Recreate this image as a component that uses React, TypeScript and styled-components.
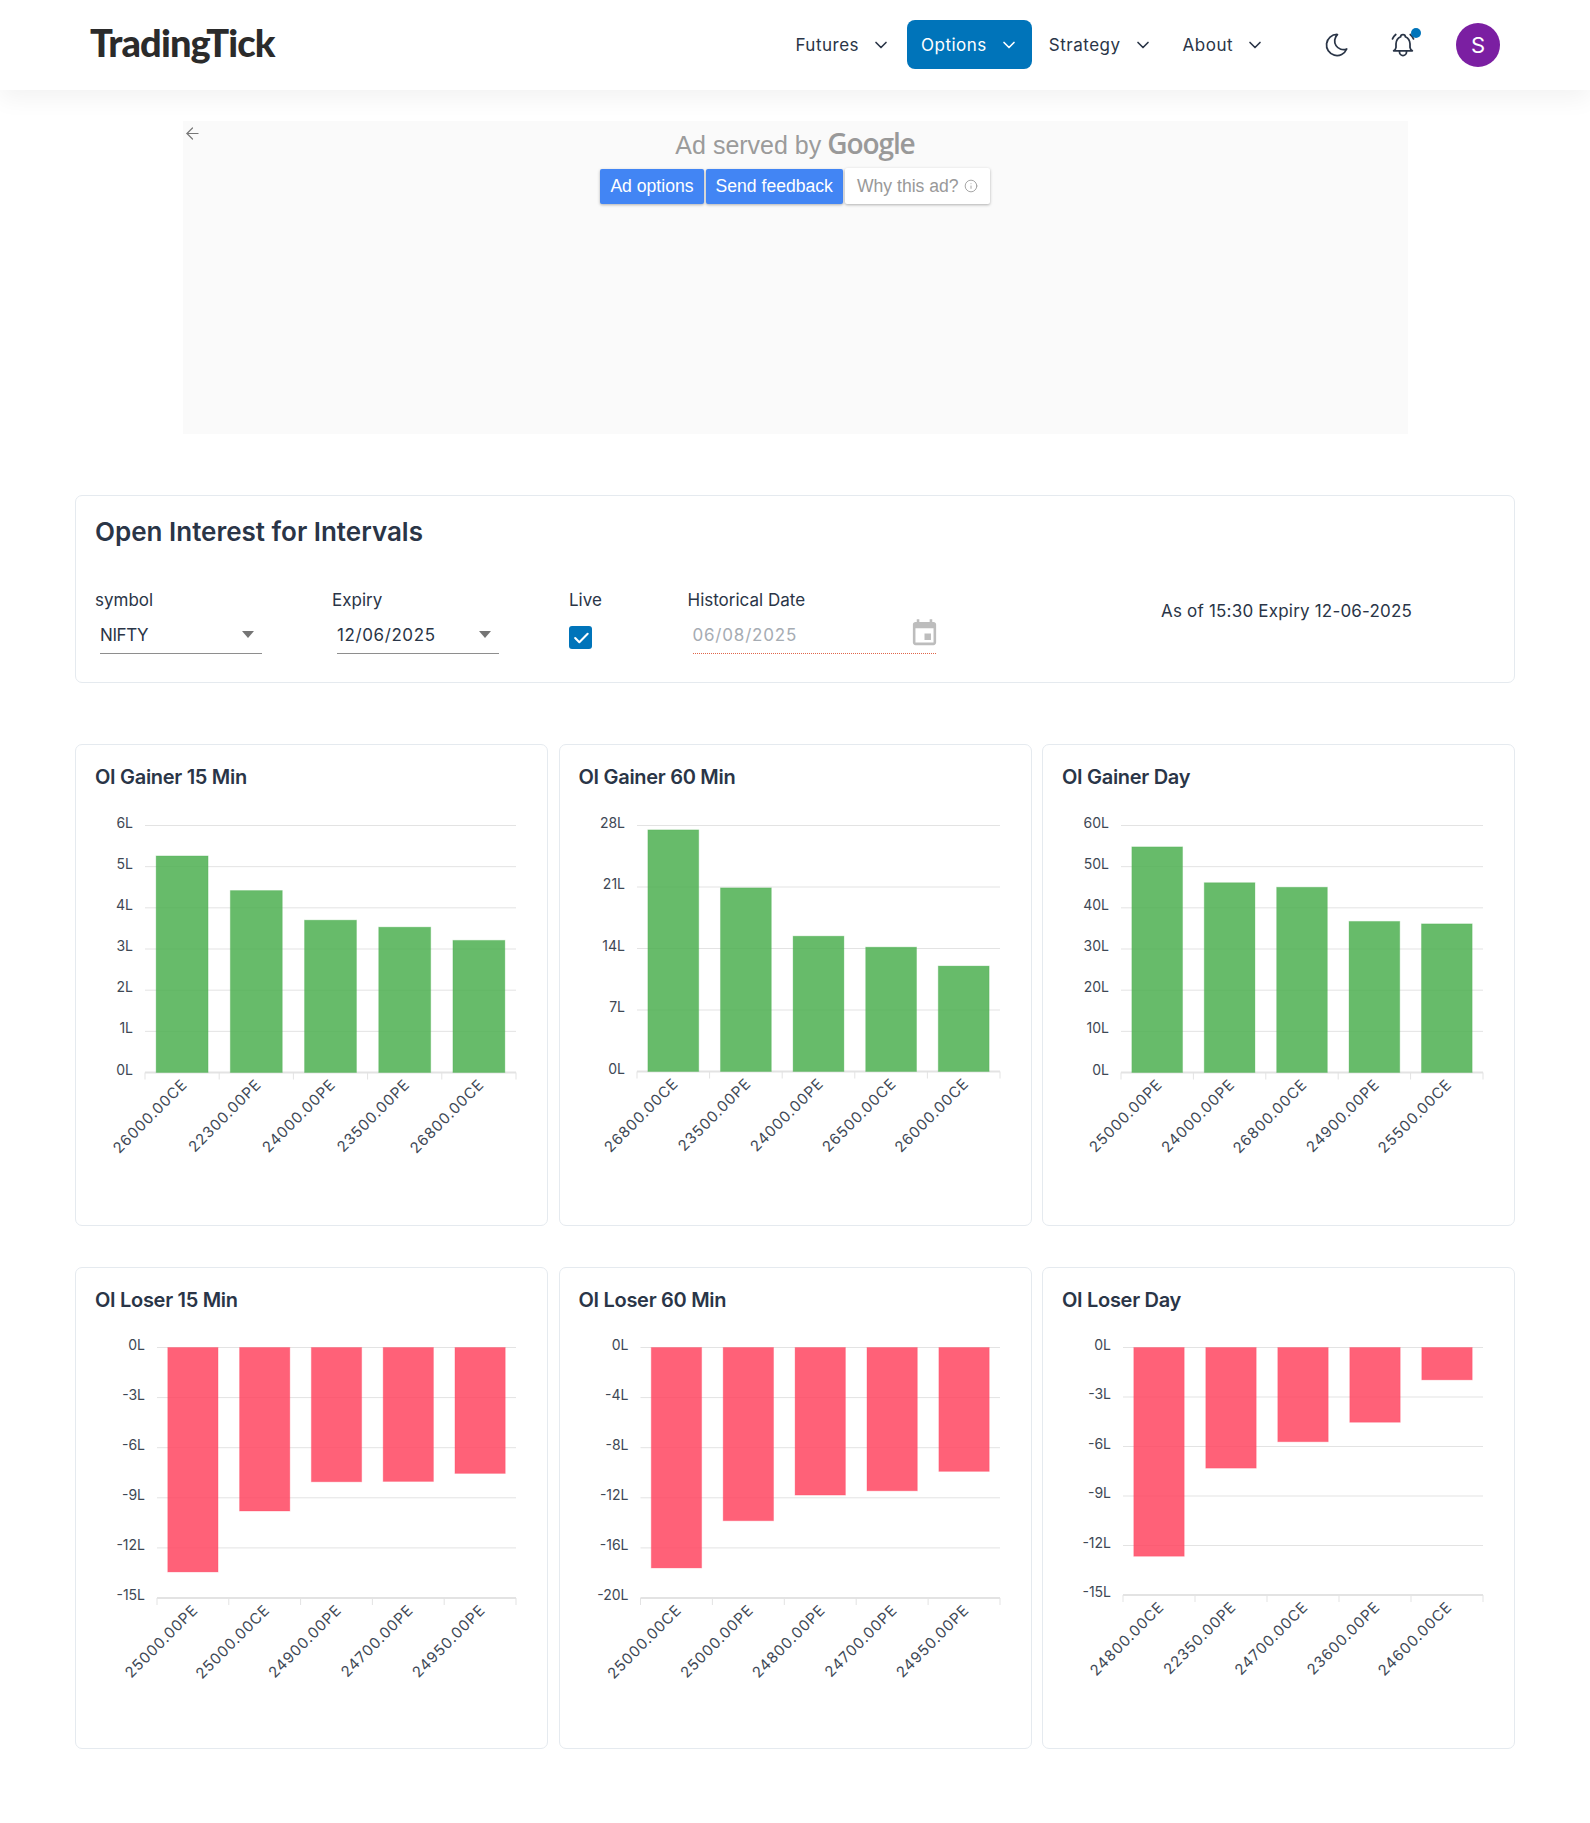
import styled, { createGlobalStyle } from 'styled-components'
import { TbBellRinging, TbCheck, TbChevronDown, TbMoon } from 'react-icons/tb'
import { ArrowLeft, Info } from 'lucide-react'

const GlobalStyle = createGlobalStyle`
    * { box-sizing: border-box; }
    body {
        margin: 0;
        background: #fff;
        color: #2a3547;
        font-family: Inter, "Open Sans", sans-serif;
    }
`

const Page = styled.div`
    min-height: 1823px;
    background: #fff;
`

const Header = styled.header`
    height: 90px;
    padding: 0 90px;
    display: flex;
    align-items: center;
    background: #fff;
    box-shadow: 0 9px 22px rgba(0, 0, 0, 0.05);
    position: relative;
`

const Logo = styled.div`
    font-family: Lato, sans-serif;
    font-weight: 900;
    font-size: 38px;
    letter-spacing: -0.9px;
    color: #2b2b2b;
    margin-right: auto;
    padding-bottom: 6px;
`

const Nav = styled.nav`
    display: flex;
    align-items: center;
    gap: 3px;
`

const NavItem = styled.div<{ $active?: boolean }>`
    height: 49px;
    margin-bottom: 2px;
    padding: 2px 13px 0 14px;
    display: flex;
    align-items: center;
    gap: 12px;
    border-radius: 8px;
    font-size: 17px;
    letter-spacing: 0.5px;
    color: ${(p) => (p.$active ? '#fff' : '#2a3547')};
    background: ${(p) => (p.$active ? '#0074ba' : 'transparent')};
`

const IconSlot = styled.div`
    position: relative;
    width: 28px;
    height: 28px;
    display: flex;
    align-items: center;
    justify-content: center;
    color: #2a3547;
`

const Tools = styled.div`
    display: flex;
    align-items: center;
    gap: 38px;
    margin-left: 45px;
`

const Dot = styled.span`
    position: absolute;
    top: -3px;
    right: -4px;
    width: 10px;
    height: 10px;
    border-radius: 50%;
    background: #0074ba;
`

const Avatar = styled.div`
    width: 44px;
    height: 44px;
    margin-left: 1px;
    border-radius: 50%;
    background: #7b1fa2;
    color: #fff;
    font-size: 22px;
    display: flex;
    align-items: center;
    justify-content: center;
`

const Main = styled.main`
    padding: 31px 75px 0;
`

const AdBox = styled.section`
    position: relative;
    width: 1225px;
    height: 313px;
    margin: 0 auto;
    padding-top: 3px;
    background: #fafafa;
    font-family: "Liberation Sans", Arial, sans-serif;
    display: flex;
    flex-direction: column;
    align-items: center;
`

const BackArrow = styled.div`
    position: absolute;
    left: 0;
    top: 3px;
    color: #777;
    display: flex;
`

const AdTitle = styled.div`
    display: flex;
    align-items: baseline;
    gap: 6px;
    height: 44px;
    font-size: 25px;
    color: #9b9b9b;
`

const GoogleWord = styled.span`
    font-family: "Open Sans", sans-serif;
    font-weight: 600;
    font-size: 28px;
    letter-spacing: -1.1px;
    color: #999;
`

const AdButtons = styled.div`
    display: flex;
    align-items: flex-end;
    gap: 2px;
`

const AdButton = styled.div<{ $plain?: boolean }>`
    height: ${(p) => (p.$plain ? 36 : 35)}px;
    padding: 0 ${(p) => (p.$plain ? 12 : 10)}px;
    display: flex;
    align-items: center;
    gap: 5px;
    font-size: 17.6px;
    border-radius: 2px;
    color: ${(p) => (p.$plain ? '#999' : '#fff')};
    background: ${(p) => (p.$plain ? '#fff' : '#4285f4')};
    box-shadow: 0 1px 3px rgba(0, 0, 0, 0.3);
`

const Panel = styled.section`
    height: 188px;
    margin-top: 61px;
    padding: 18px 19px;
    background: #fff;
    border: 1px solid #e5eaef;
    border-radius: 7px;
`

const PanelTitle = styled.h4`
    margin: 0;
    font-size: 26px;
    line-height: 36px;
    font-weight: 600;
    letter-spacing: 0;
    color: #2a3547;
`

const Filters = styled.div`
    margin-top: 38px;
    display: flex;
    align-items: flex-start;
`

const Field = styled.div<{ $width: number }>`
    width: ${(p) => p.$width}px;
    flex: none;
`

const FieldLabel = styled.div`
    font-size: 17px;
    line-height: 24px;
    color: #2a3547;
`

const SelectBox = styled.div<{ $spaced?: boolean }>`
    width: 162px;
    height: 35px;
    margin: 7px 0 0 5px;
    padding-right: 8px;
    display: flex;
    align-items: center;
    justify-content: space-between;
    border-bottom: 1px solid #8e8e8e;
    font-size: 17px;
    letter-spacing: ${(p) => (p.$spaced ? 0.6 : -0.4)}px;
    padding-bottom: 3px;
    color: #2a3547;
`

const Caret = styled.span`
    width: 0;
    height: 0;
    border-left: 6px solid transparent;
    border-right: 6px solid transparent;
    border-top: 7px solid #757575;
`

const CheckBox = styled.div`
    width: 23px;
    height: 23px;
    margin-top: 14px;
    border-radius: 3px;
    background: #0074ba;
    color: #fff;
    display: flex;
    align-items: center;
    justify-content: center;
`

const DateBox = styled.div`
    width: 243px;
    height: 35px;
    margin: 7px 0 0 5px;
    padding: 0 0 2px;
    display: flex;
    align-items: center;
    justify-content: space-between;
    border-bottom: 1px dotted #e0654a;
    font-size: 17px;
    letter-spacing: 0.8px;
    color: #a6acb3;
`

const CalendarIcon = styled.svg`
    width: 31px;
    height: 31px;
    margin: -4px -4px 0 0;
    fill: #bdbdbd;
`

const AsOf = styled.div`
    margin-top: 11px;
    font-size: 17px;
    line-height: 24px;
    letter-spacing: 0.2px;
    white-space: nowrap;
    color: #2a3547;
`

const ChartGrid = styled.section`
    margin-top: 61px;
    display: grid;
    grid-template-columns: repeat(3, 473px);
    column-gap: 10.5px;
    row-gap: 41px;
`

const Card = styled.article`
    height: 482px;
    padding: 15px 20px 0;
    background: #fff;
    border: 1px solid #e5eaef;
    border-radius: 7px;
`

const CardTitle = styled.h5`
    margin: 0 0 0 -1px;
    height: 44px;
    font-size: 20px;
    line-height: 34px;
    font-weight: 600;
    letter-spacing: -0.3px;
    color: #2a3547;
`

const ChartSvg = styled.svg`
    display: block;
    width: 431px;
    height: 400px;
    overflow: visible;
`

const GridLine = styled.line<{ $axis?: boolean }>`
    stroke: #e3e3e3;
    stroke-width: ${(p) => (p.$axis ? 2 : 1)};
`

const Bar = styled.rect<{ $loss?: boolean }>`
    fill: ${(p) => (p.$loss ? '#ff4560' : '#4caf50')};
    fill-opacity: 0.85;
    stroke: ${(p) => (p.$loss ? '#ff4560' : '#4caf50')};
    stroke-opacity: 0.3;
`

const AxisText = styled.text`
    font-family: Inter, sans-serif;
    font-size: 14px;
    fill: #3e4855;
`

const SlantText = styled(AxisText)`
    font-size: 15px;
    letter-spacing: 0.8px;
`

const MoonIcon = styled(TbMoon)`
    width: 28px;
    height: 28px;
    stroke-width: 1.5;
`

type ChartSpec = {
    title: string
    plotLeft: number
    plotTop: number
    plotBottom: number
    ticks: string[]
    max: number
    values: number[]
    labels: string[]
    loss?: boolean
}

const PLOT_RIGHT = 420

const charts: ChartSpec[] = [
    {
        title: 'OI Gainer 15 Min', plotLeft: 49, plotTop: 21.5, plotBottom: 268.5, max: 6,
        ticks: ['6L', '5L', '4L', '3L', '2L', '1L', '0L'],
        values: [5.26, 4.42, 3.7, 3.53, 3.21],
        labels: ['26000.00CE', '22300.00PE', '24000.00PE', '23500.00PE', '26800.00CE'],
    },
    {
        title: 'OI Gainer 60 Min', plotLeft: 57, plotTop: 21.5, plotBottom: 267.5, max: 28,
        ticks: ['28L', '21L', '14L', '7L', '0L'],
        values: [27.5, 20.9, 15.4, 14.15, 12],
        labels: ['26800.00CE', '23500.00PE', '24000.00PE', '26500.00CE', '26000.00CE'],
    },
    {
        title: 'OI Gainer Day', plotLeft: 58, plotTop: 21.5, plotBottom: 268.5, max: 60,
        ticks: ['60L', '50L', '40L', '30L', '20L', '10L', '0L'],
        values: [54.8, 46.1, 45, 36.7, 36.1],
        labels: ['25000.00PE', '24000.00PE', '26800.00CE', '24900.00PE', '25500.00CE'],
    },
    {
        title: 'OI Loser 15 Min', plotLeft: 61, plotTop: 20.5, plotBottom: 271, max: 15, loss: true,
        ticks: ['0L', '-3L', '-6L', '-9L', '-12L', '-15L'],
        values: [13.44, 9.79, 8.04, 8.02, 7.54],
        labels: ['25000.00PE', '25000.00CE', '24900.00PE', '24700.00PE', '24950.00PE'],
    },
    {
        title: 'OI Loser 60 Min', plotLeft: 60.5, plotTop: 20.5, plotBottom: 271, max: 20, loss: true,
        ticks: ['0L', '-4L', '-8L', '-12L', '-16L', '-20L'],
        values: [17.6, 13.83, 11.78, 11.44, 9.89],
        labels: ['25000.00CE', '25000.00PE', '24800.00PE', '24700.00PE', '24950.00PE'],
    },
    {
        title: 'OI Loser Day', plotLeft: 60, plotTop: 20.5, plotBottom: 268, max: 15, loss: true,
        ticks: ['0L', '-3L', '-6L', '-9L', '-12L', '-15L'],
        values: [12.65, 7.31, 5.71, 4.53, 1.96],
        labels: ['24800.00CE', '22350.00PE', '24700.00CE', '23600.00PE', '24600.00CE'],
    },
]

const BarChart = ({ spec }: { spec: ChartSpec }) => {
    const { plotLeft, plotTop, plotBottom, ticks, values, labels, max, loss } = spec
    const height = plotBottom - plotTop
    const slot = (PLOT_RIGHT - plotLeft) / values.length
    const barWidth = slot * 0.7
    const tickY = (i: number) => plotTop + (height * i) / (ticks.length - 1)

    return (
        <ChartSvg viewBox="0 0 431 400">
            {ticks.map((tick, i) => (
                <g key={tick}>
                    <GridLine
                        x1={plotLeft}
                        x2={PLOT_RIGHT}
                        y1={tickY(i)}
                        y2={tickY(i)}
                        $axis={i === ticks.length - 1}
                    />
                    <AxisText x={plotLeft - 12} y={tickY(i) + 2} textAnchor="end">
                        {tick}
                    </AxisText>
                </g>
            ))}
            {values.map((value, i) => {
                const h = (value / max) * height
                const x = plotLeft + slot * i + (slot - barWidth) / 2
                return (
                    <Bar
                        key={i}
                        x={x}
                        y={loss ? plotTop : plotBottom - h}
                        width={barWidth}
                        height={h}
                        $loss={loss}
                    />
                )
            })}
            {[0, 1, 2, 3, 4, 5].map((i) => (
                <GridLine
                    key={i}
                    x1={plotLeft + slot * i}
                    x2={plotLeft + slot * i}
                    y1={plotBottom}
                    y2={plotBottom + 7}
                />
            ))}
            {labels.map((label, i) => {
                const x = plotLeft + slot * i + slot / 2 + 6
                const y = plotBottom + 13
                return (
                    <SlantText key={i} x={x} y={y} textAnchor="end" transform={`rotate(-45 ${x} ${y})`}>
                        {label}
                    </SlantText>
                )
            })}
        </ChartSvg>
    )
}

const App = () => {
    return (
        <Page>
            <GlobalStyle />
            <Header>
                <Logo>TradingTick</Logo>
                <Nav>
                    <NavItem>Futures <TbChevronDown size={20} /></NavItem>
                    <NavItem $active>Options <TbChevronDown size={20} /></NavItem>
                    <NavItem>Strategy <TbChevronDown size={20} /></NavItem>
                    <NavItem>About <TbChevronDown size={20} /></NavItem>
                </Nav>
                <Tools>
                    <IconSlot><MoonIcon /></IconSlot>
                    <IconSlot>
                        <TbBellRinging size={28} strokeWidth={1.5} />
                        <Dot />
                    </IconSlot>
                    <Avatar>S</Avatar>
                </Tools>
            </Header>
            <Main>
                <AdBox>
                    <BackArrow><ArrowLeft size={19} strokeWidth={1.5} /></BackArrow>
                    <AdTitle>Ad served by <GoogleWord>Google</GoogleWord></AdTitle>
                    <AdButtons>
                        <AdButton>Ad options</AdButton>
                        <AdButton>Send feedback</AdButton>
                        <AdButton $plain>Why this ad? <Info size={14} strokeWidth={1.5} /></AdButton>
                    </AdButtons>
                </AdBox>
                <Panel>
                    <PanelTitle>Open Interest for Intervals</PanelTitle>
                    <Filters>
                        <Field $width={237}>
                            <FieldLabel>symbol</FieldLabel>
                            <SelectBox>NIFTY <Caret /></SelectBox>
                        </Field>
                        <Field $width={237}>
                            <FieldLabel>Expiry</FieldLabel>
                            <SelectBox $spaced>12/06/2025 <Caret /></SelectBox>
                        </Field>
                        <Field $width={118.5}>
                            <FieldLabel>Live</FieldLabel>
                            <CheckBox><TbCheck size={20} strokeWidth={2.5} /></CheckBox>
                        </Field>
                        <Field $width={473.5}>
                            <FieldLabel>Historical Date</FieldLabel>
                            <DateBox>
                                06/08/2025
                                <CalendarIcon viewBox="0 0 24 24">
                                    <path d="M17 12h-5v5h5v-5zM16 1v2H8V1H6v2H5c-1.11 0-1.99.9-1.99 2L3 19c0 1.1.89 2 2 2h14c1.1 0 2-.9 2-2V5c0-1.1-.9-2-2-2h-1V1h-2zm3 18H5V8h14v11z" />
                                </CalendarIcon>
                            </DateBox>
                        </Field>
                        <AsOf>As of 15:30 Expiry 12-06-2025</AsOf>
                    </Filters>
                </Panel>
                <ChartGrid>
                    {charts.map((spec) => (
                        <Card key={spec.title}>
                            <CardTitle>{spec.title}</CardTitle>
                            <BarChart spec={spec} />
                        </Card>
                    ))}
                </ChartGrid>
            </Main>
        </Page>
    )
}

export default App
